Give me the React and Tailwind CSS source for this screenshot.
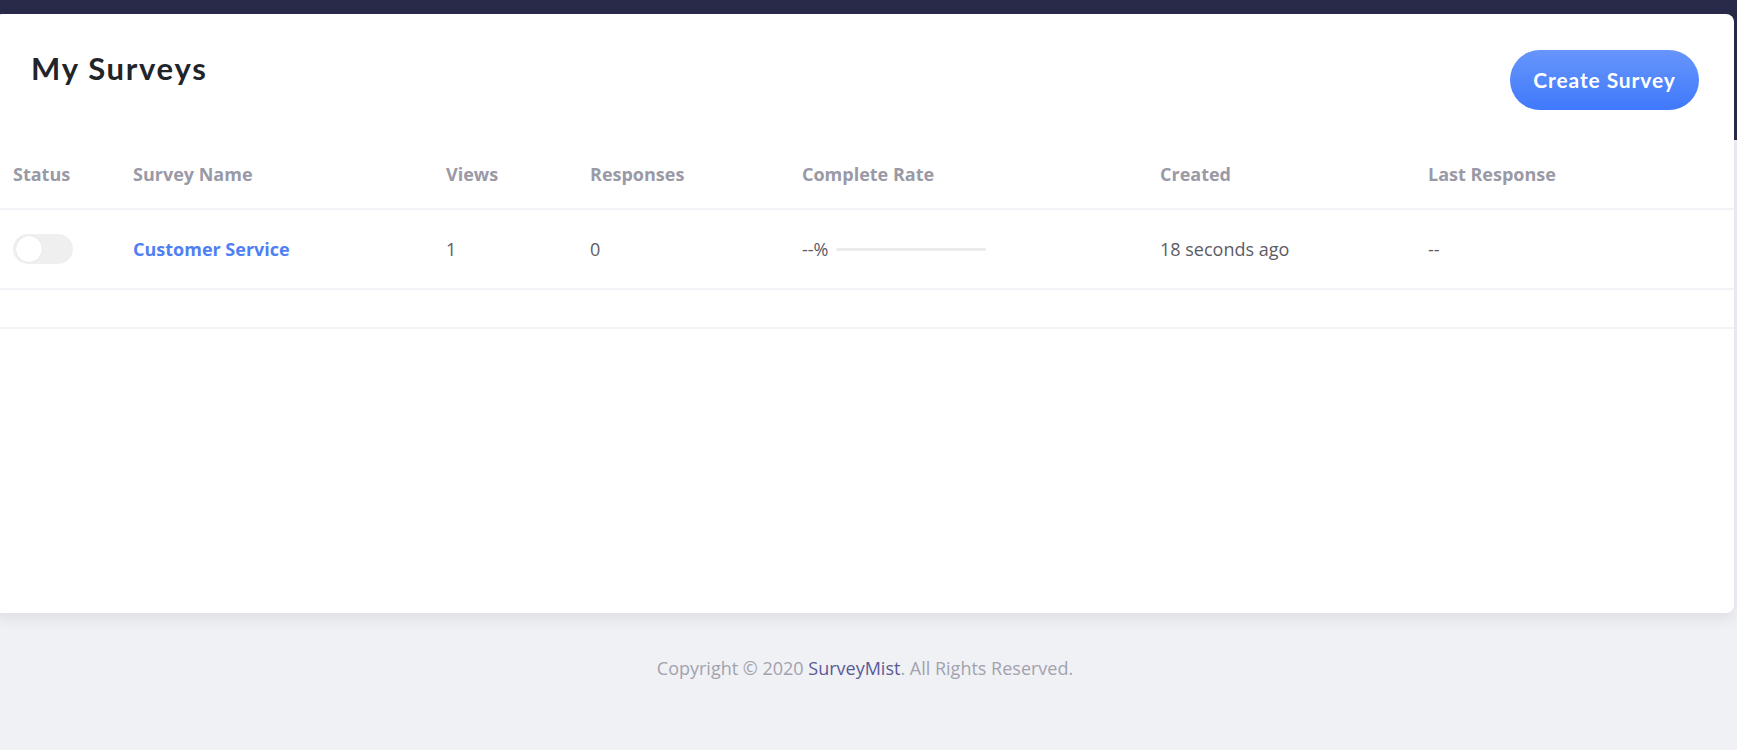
export default function App() {
  const cols = "grid grid-cols-[120px_313px_144px_212px_358px_268px_1fr] pl-[19px] items-center";
  return (
    <div
      className="min-h-screen bg-[linear-gradient(to_bottom,#29294a_140px,#f0f1f5_140px)] pt-[14px] overflow-hidden"
      style={{ fontFamily: '"Open Sans", "Liberation Sans", sans-serif' }}
    >
      <div className="-ml-[6px] mr-[3px] h-[599px] rounded-lg bg-white shadow-[0_6px_14px_rgba(40,40,70,0.09)]">
        <div className="flex items-start justify-between pl-[37px] pr-[35px] pt-[36px]">
          <h1
            className="text-[31px] leading-[36px] font-bold tracking-[1.7px] text-[#212529]"
            style={{ fontFamily: 'Lato, "Open Sans", sans-serif' }}
          >
            My Surveys
          </h1>
          <button
            className="h-[60px] w-[189px] rounded-full bg-[linear-gradient(to_bottom,#6795fb,#3f79fb)] text-[21px] font-bold tracking-[0.9px] text-white"
            style={{ fontFamily: 'Lato, "Open Sans", sans-serif' }}
          >
            Create Survey
          </button>
        </div>

        <div className={`${cols} mt-[31px] h-[69px] border-b-2 border-[#f2f4f8] text-[18px] font-bold text-[#9a99a6]`}>
          <div>Status</div>
          <div>Survey Name</div>
          <div>Views</div>
          <div>Responses</div>
          <div>Complete Rate</div>
          <div>Created</div>
          <div>Last Response</div>
        </div>

        <div className={`${cols} h-[80px] border-b-2 border-[#f2f4f8] text-[18px] text-[#5c5c66]`}>
          <div>
            <div className="flex h-[30px] w-[60px] items-center rounded-full bg-[#efefef] px-[3px]">
              <div className="h-[26px] w-[26px] rounded-full bg-white shadow-[0_0_1px_rgba(0,0,0,0.15)]" />
            </div>
          </div>
          <div className="font-bold text-[#4f7ff5]">Customer Service</div>
          <div>1</div>
          <div>0</div>
          <div className="flex items-center gap-[8px]">
            <span>--%</span>
            <div className="h-[3px] w-[150px] rounded-full bg-[#ebebeb]" />
          </div>
          <div>18 seconds ago</div>
          <div>--</div>
        </div>

        <div className="h-[39px] border-b-2 border-[#f2f4f8]" />
      </div>

      <footer className="pt-[43px] pr-[7px] text-center text-[18px] leading-[24px] text-[#a2a2ae]">
        Copyright © 2020 <span className="text-[#5a5a98]">SurveyMist</span>. All Rights Reserved.
      </footer>
    </div>
  );
}
